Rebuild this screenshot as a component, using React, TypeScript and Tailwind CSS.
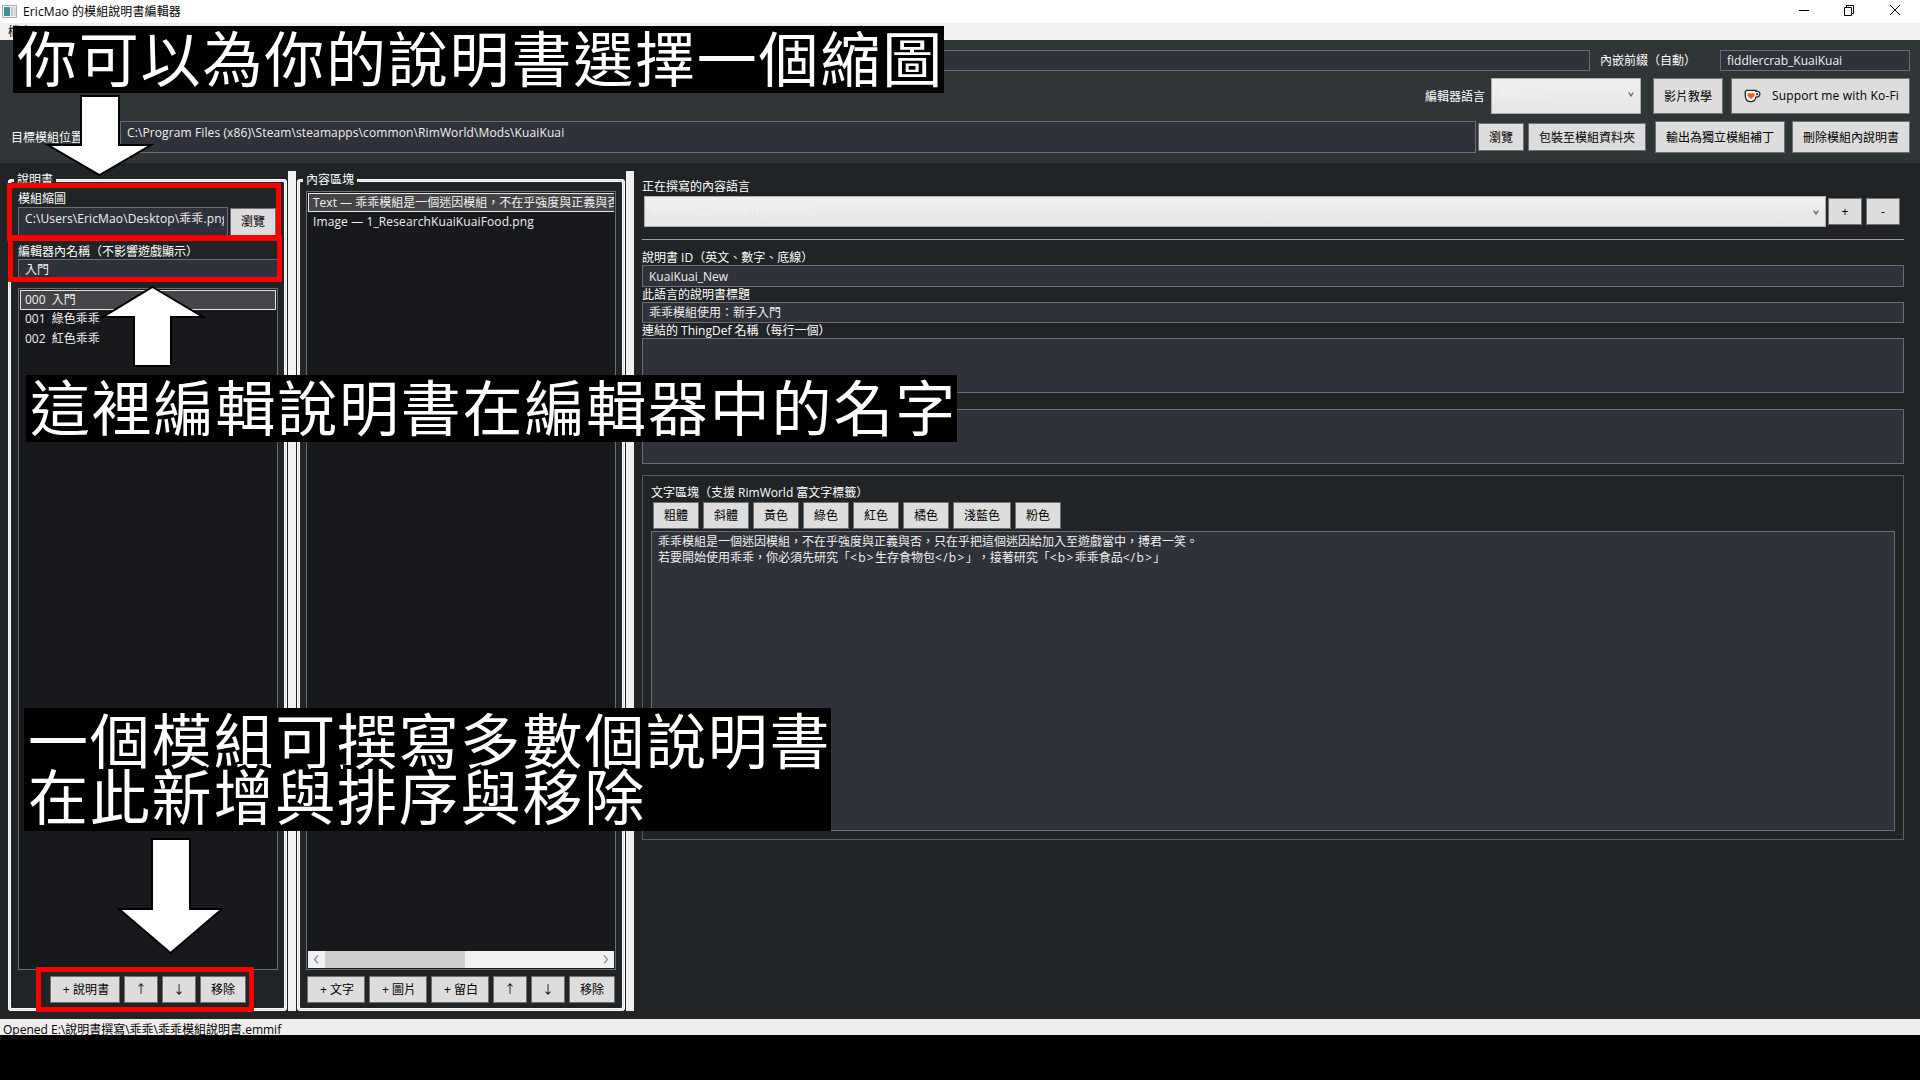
import React from 'react';
import { clsx } from 'clsx';

interface BoxProps {
    children?: React.ReactNode;
    className?: string;
}

const Button: React.FC<BoxProps> = ({ children, className }) => (
    <button
        className={clsx(
            "flex shrink-0 items-center justify-center border border-[#707070] bg-[#dddddd] text-black whitespace-nowrap",
            className
        )}
    >
        {children}
    </button>
);

const Field: React.FC<BoxProps> = ({ children, className }) => (
    <div className={clsx("overflow-hidden border border-[#6b6e76] bg-[#30323b] text-[#f0f0f0] whitespace-nowrap", className)}>
        {children}
    </div>
);

const Combo: React.FC<BoxProps> = ({ children, className }) => (
    <div
        className={clsx(
            "flex shrink-0 justify-between border border-[#acacac] bg-gradient-to-b from-[#f0f0f0] to-[#e5e5e5] pl-[5px] text-[#f0f0f0]",
            className
        )}
    >
        <span className="leading-[26px]">{children}</span>
        <svg className="mt-[13px] mr-[6px] h-[6px] w-[6px]" viewBox="0 0 6 6">
            <path d="M0.8 0.5 L3 4 L5.200 0.5" fill="none" stroke="#606060" strokeWidth="1.300" />
        </svg>
    </div>
);

/* Titled frame with the triple white line of the classic group box */
const GroupBox: React.FC<BoxProps & { title: string }> = ({ title, children, className }) => (
    <section
        className={clsx(
            "relative flex shrink-0 flex-col rounded-[4px] shadow-[inset_0_0_0_1px_#fff,inset_0_0_0_2px_#d5dfe5,inset_0_0_0_3px_#fff]",
            className
        )}
    >
        <h2 className="absolute -top-[9px] left-[6px] bg-[#202426] px-[3px] leading-[19px]">{title}</h2>
        {children}
    </section>
);

const Arrow: React.FC<{ className: string; points: string; viewBox: string }> = ({ className, points, viewBox }) => (
    <svg className={clsx("absolute overflow-visible", className)} viewBox={viewBox}>
        <polygon points={points} fill="#fff" stroke="#000" strokeWidth="2" />
    </svg>
);

const Caption: React.FC<BoxProps> = ({ children, className }) => (
    <div
        className={clsx(
            "absolute bg-black pt-[5px] pl-[4px] text-[60px] leading-[56px] tracking-[1.8px] text-white whitespace-nowrap [-webkit-text-stroke:8px_black] [paint-order:stroke_fill]",
            className
        )}
    >
        {children}
    </div>
);

const Tag: React.FC<{ name: string }> = ({ name }) => <span className="tracking-[1.3px]">{`<${name}>`}</span>;

const KofiIcon = () => (
    <svg className="h-[14px] w-[17px]" viewBox="0 0 17 14">
        <path
            d="M2.500 1.300h9.500v1.200c2-.4 3.900.2 3.900 2.300 0 2.300-1.900 3.400-3.900 3.400-.5 2.800-2.200 4.500-5 4.500-3.700 0-5.700-2.700-5.700-6.200V2.500z"
            fill="#fff"
            stroke="#202020"
            strokeWidth="1.300"
        />
        <path d="M12.300 4v2.500c1.200 0 1.700-.6 1.700-1.300S13.500 4 12.300 4z" fill="#202020" />
        <path d="M7 10.300 3.700 6.900C2.400 5.300 4.500 2.600 7 4.600c2.500-2 4.600.7 3.300 2.300z" fill="#ff5a16" />
    </svg>
);

const manuals = ["000  入門", "001  綠色乖乖", "002  紅色乖乖"];

const formats = [
    { label: "粗體", width: "w-[46px]" },
    { label: "斜體", width: "w-[46px]" },
    { label: "黃色", width: "w-[46px]" },
    { label: "綠色", width: "w-[46px]" },
    { label: "紅色", width: "w-[46px]" },
    { label: "橘色", width: "w-[46px]" },
    { label: "淺藍色", width: "w-[58px]" },
    { label: "粉色", width: "w-[46px]" },
];

const TitleBar = () => (
    <header className="flex h-[23px] items-center bg-white text-black">
        <svg className="ml-[2px] h-[13px] w-[15px]" viewBox="0 0 15 13">
            <rect x="0.5" y="0.5" width="14" height="12" fill="#f4f4f4" stroke="#a8adb0" />
            <rect x="2" y="2" width="6" height="9" fill="#3c8f92" />
            <rect x="9" y="2" width="2" height="9" fill="#b6c8d8" />
            <rect x="12" y="2" width="1.500" height="9" fill="#c8ccd0" />
        </svg>
        <span className="ml-[6px] tracking-[0.1px]">EricMao 的模組說明書編輯器</span>
        <svg className="mt-[-3px] mr-[18px] ml-auto h-[12px] w-[103px]" viewBox="0 0 103 12" fill="none" stroke="#000">
            <path d="M0 6.500h10" />
            <path d="M45.500 3.500h7v8h-7zM47.500 3.500v-2h7v8h-2" />
            <path d="M91 1l10 10M101 1l-10 10" />
        </svg>
    </header>
);

const Toolbar = () => (
    <div className="flex h-[123px] flex-col bg-[#303538] pt-[10px] pr-[10px] pl-[11px]">
        <div className="flex h-[21px] items-center">
            <Field className="ml-[109px] h-[21px] flex-1" />
            <span className="ml-[10px] w-[120px]">內嵌前綴（自動）</span>
            <Field className="h-[21px] w-[190px] pl-[6px] leading-[19px]">fiddlercrab_KuaiKuai</Field>
        </div>
        <div className="mt-[7px] flex h-[36px] items-center justify-end">
            <span className="mt-px mr-[6px]">編輯器語言</span>
            <Combo className="h-[36px] w-[150px]">繁體中文</Combo>
            <Button className="ml-[12px] h-[36px] w-[70px] pt-px">影片教學</Button>
            <Button className="ml-[8px] h-[36px] w-[179px] gap-[11px] pl-[2px]">
                <KofiIcon />
                <span className="tracking-[0.15px]">Support me with Ko-Fi</span>
            </Button>
        </div>
        <div className="mt-[7px] flex h-[32px] items-center">
            <span className="mt-[2px] w-[109px]">目標模組位置</span>
            <Field className="h-[32px] flex-1 pl-[6px] leading-[22px] tracking-[0.11px]">
                {"C:\\Program Files (x86)\\Steam\\steamapps\\common\\RimWorld\\Mods\\KuaiKuai"}
            </Field>
            <Button className="ml-[2px] h-[28px] w-[46px] pt-px">瀏覽</Button>
            <Button className="ml-[4px] h-[28px] w-[118px] pt-px">包裝至模組資料夾</Button>
            <Button className="ml-[9px] h-[32px] w-[130px] pt-px">輸出為獨立模組補丁</Button>
            <Button className="ml-[7px] h-[32px] w-[118px] pt-px">刪除模組內說明書</Button>
        </div>
    </div>
);

const ManualPanel = () => (
    <GroupBox title="說明書" className="mt-[16px] h-[832px] w-[279px] pr-[9px] pl-[10px]">
        <div className="mt-[10px] h-[18px] leading-[20px]">模組縮圖</div>
        <div className="flex h-[32px]">
            <Field className="h-[32px] w-[210px] pl-[6px] leading-[21px]">
                <span className="block w-[199px] overflow-hidden tracking-[0.11px]">{"C:\\Users\\EricMao\\Desktop\\乖乖.png"}</span>
            </Field>
            <Button className="mt-[1px] ml-[2px] h-[28px] w-[46px]">瀏覽</Button>
        </div>
        <div className="mt-[4px] h-[18px] leading-[18px]">編輯器內名稱（不影響遊戲顯示）</div>
        <Field className="mt-[-2px] h-[22px] pl-[6px] leading-[20px]">入門</Field>
        <ul className="mt-[7px] h-[682px] border border-[#6b6e76] bg-[#18191d] p-px text-[#f0f0f0]">
            {manuals.map((name, i) => (
                <li
                    key={name}
                    className={clsx(
                        "flex h-[19.500px] items-center border pl-[4px] whitespace-pre",
                        i === 0 ? "border-[#e6e6e6] bg-[#454548]" : "border-transparent"
                    )}
                >
                    {name}
                </li>
            ))}
        </ul>
        <div className="mt-[6px] ml-[32px] flex gap-[4px]">
            <Button className="h-[27px] w-[70px] pt-px pl-[2px] tracking-[0.1px]">+ 說明書</Button>
            <Button className="h-[27px] w-[34px] text-[#333]">↑</Button>
            <Button className="h-[27px] w-[34px] text-[#333]">↓</Button>
            <Button className="h-[27px] w-[46px] pt-px">移除</Button>
        </div>
    </GroupBox>
);

const BlockPanel = () => (
    <GroupBox title="內容區塊" className="mt-[16px] ml-px h-[832px] w-[328px] pr-[9px] pl-[9px]">
        <div className="mt-[12px] flex h-[779px] flex-col border border-[#6b6e76] bg-[#18191d] p-px text-[#f0f0f0]">
            <div className="h-[19px] overflow-hidden border border-r-0 border-[#e6e6e6] bg-[#454548] pl-[4px] leading-[18px] whitespace-nowrap">
                Text — 乖乖模組是一個迷因模組，不在乎強度與正義與否
            </div>
            <div className="pl-[5px] leading-[20px] tracking-[0.11px]">Image — 1_ResearchKuaiKuaiFood.png</div>
            <div className="mt-auto flex h-[17px] items-center bg-[#f0f0f0]">
                <svg className="h-[9px] w-[17px]" viewBox="0 0 17 9">
                    <path d="M10 0.500 6.500 4.500 10 8.500" fill="none" stroke="#909090" strokeWidth="1.300" />
                </svg>
                <div className="h-[17px] w-[140px] bg-[#cdcdcd]" />
                <svg className="ml-auto h-[9px] w-[17px]" viewBox="0 0 17 9">
                    <path d="M7 0.500 10.500 4.500 7 8.500" fill="none" stroke="#909090" strokeWidth="1.300" />
                </svg>
            </div>
        </div>
        <div className="mt-[6px] ml-px flex gap-[4px]">
            <Button className="h-[27px] w-[58px] pt-px pl-[2px]">+ 文字</Button>
            <Button className="h-[27px] w-[58px] pt-px pl-[2px]">+ 圖片</Button>
            <Button className="h-[27px] w-[58px] pt-px pl-[2px]">+ 留白</Button>
            <Button className="h-[27px] w-[34px] text-[#333]">↑</Button>
            <Button className="h-[27px] w-[34px] text-[#333]">↓</Button>
            <Button className="h-[27px] w-[46px] pt-px">移除</Button>
        </div>
    </GroupBox>
);

const Editor = () => (
    <main className="ml-[8px] w-[1262px] pt-[15px]">
        <div className="leading-[18px]">正在撰寫的內容語言</div>
        <div className="flex h-[31px] items-center pl-[2px]">
            <Combo className="h-[31px] w-[1182px]">繁體中文 (ChineseTraditional)</Combo>
            <Button className="ml-[2px] h-[27px] w-[34px]">+</Button>
            <Button className="ml-[4px] h-[27px] w-[34px]">-</Button>
        </div>
        <div className="mt-[12px] h-px bg-[#a0a0a0]" />
        <div className="mt-[9px] h-[16px] leading-[18px]">說明書 ID（英文、數字、底線）</div>
        <Field className="h-[22px] pl-[6px] leading-[22px]">KuaiKuai_New</Field>
        <div className="h-[15px] leading-[15px]">此語言的說明書標題</div>
        <Field className="h-[21px] pl-[6px] leading-[20px]">乖乖模組使用：新手入門</Field>
        <div className="h-[15px] leading-[15px]">連結的 ThingDef 名稱（每行一個）</div>
        <Field className="h-[55px]" />
        <Field className="mt-[16px] h-[55px]" />
        <div className="mt-[11px] h-[365px] border border-[#5a5c5f] px-[8px]">
            <div className="mt-[8px] leading-[18px]">文字區塊（支援 RimWorld 富文字標籤）</div>
            <div className="flex gap-[4px] pl-[2px]">
                {formats.map((format) => (
                    <Button key={format.label} className={clsx("h-[27px] pt-px", format.width)}>{format.label}</Button>
                ))}
            </div>
            <Field className="mt-[2px] h-[300px] pt-[2px] pl-[6px] leading-[16px]">
                <p>乖乖模組是一個迷因模組，不在乎強度與正義與否，只在乎把這個迷因給加入至遊戲當中，搏君一笑。</p>
                <p>
                    若要開始使用乖乖，你必須先研究「<Tag name="b" />生存食物包<Tag name="/b" />」，接著研究「<Tag name="b" />乖乖食品<Tag name="/b" />」
                </p>
            </Field>
        </div>
    </main>
);

export default function App() {
    return (
        <div
            lang="zh-Hant"
            className="relative flex h-[1080px] w-[1920px] flex-col overflow-hidden bg-black font-['Open_Sans','Noto_Sans_CJK_TC',sans-serif] text-[12px] leading-[18px] text-white [font-variant-ligatures:none] [text-spacing-trim:space-all]"
        >
            <TitleBar />
            <div className="h-[17px] bg-[#f0f0f0] pl-[8px] leading-[17px] text-black">檔案</div>
            <Toolbar />
            <div className="flex h-[856px] bg-[#202426] pl-[8px]">
                <ManualPanel />
                <div className="mt-[8px] ml-px h-[840px] w-[8px] bg-[#f0f0f0]" />
                <BlockPanel />
                <div className="mt-[8px] ml-px h-[840px] w-[8px] bg-[#f0f0f0]" />
                <Editor />
            </div>
            <footer className="h-[16px] overflow-hidden bg-[#f0eded] pl-[3px] leading-[21px] text-black">
                {"Opened E:\\說明書撰寫\\乖乖\\乖乖模組說明書.emmif"}
            </footer>

            {/* Tutorial highlights */}
            <div className="absolute top-[183px] left-[7px] h-[58px] w-[274px] border-[5px] border-[#ff0000]" />
            <div className="absolute top-[235px] left-[8px] h-[47px] w-[274px] border-[5px] border-[#ff0000]" />
            <div className="absolute top-[967px] left-[36px] h-[45px] w-[218px] border-[5px] border-[#ff0000]" />

            {/* Tutorial captions */}
            <Caption className="top-[26px] left-[13px] h-[67px] w-[931px]">你可以為你的說明書選擇一個縮圖</Caption>
            <Caption className="top-[375px] left-[26px] h-[67px] w-[931px]">這裡編輯說明書在編輯器中的名字</Caption>
            <Caption className="top-[708px] left-[24px] h-[123px] w-[807px]">
                一個模組可撰寫多數個說明書
                <br />
                在此新增與排序與移除
            </Caption>

            <Arrow
                className="top-[95px] left-[48px] h-[81px] w-[104px]"
                viewBox="0 0 104 81"
                points="33,1 71,1 71,50 103,50 51.5,80 0,50 33,50"
            />
            <Arrow
                className="top-[286px] left-[103px] h-[81px] w-[101px]"
                viewBox="0 0 101 81"
                points="49.5,1 100,31 68,31 68,80 31,80 31,31 0,31"
            />
            <Arrow
                className="top-[838px] left-[118px] h-[116px] w-[105px]"
                viewBox="0 0 105 116"
                points="34,1 72,1 72,71 104,71 52.5,115 1,71 34,71"
            />
        </div>
    );
}
